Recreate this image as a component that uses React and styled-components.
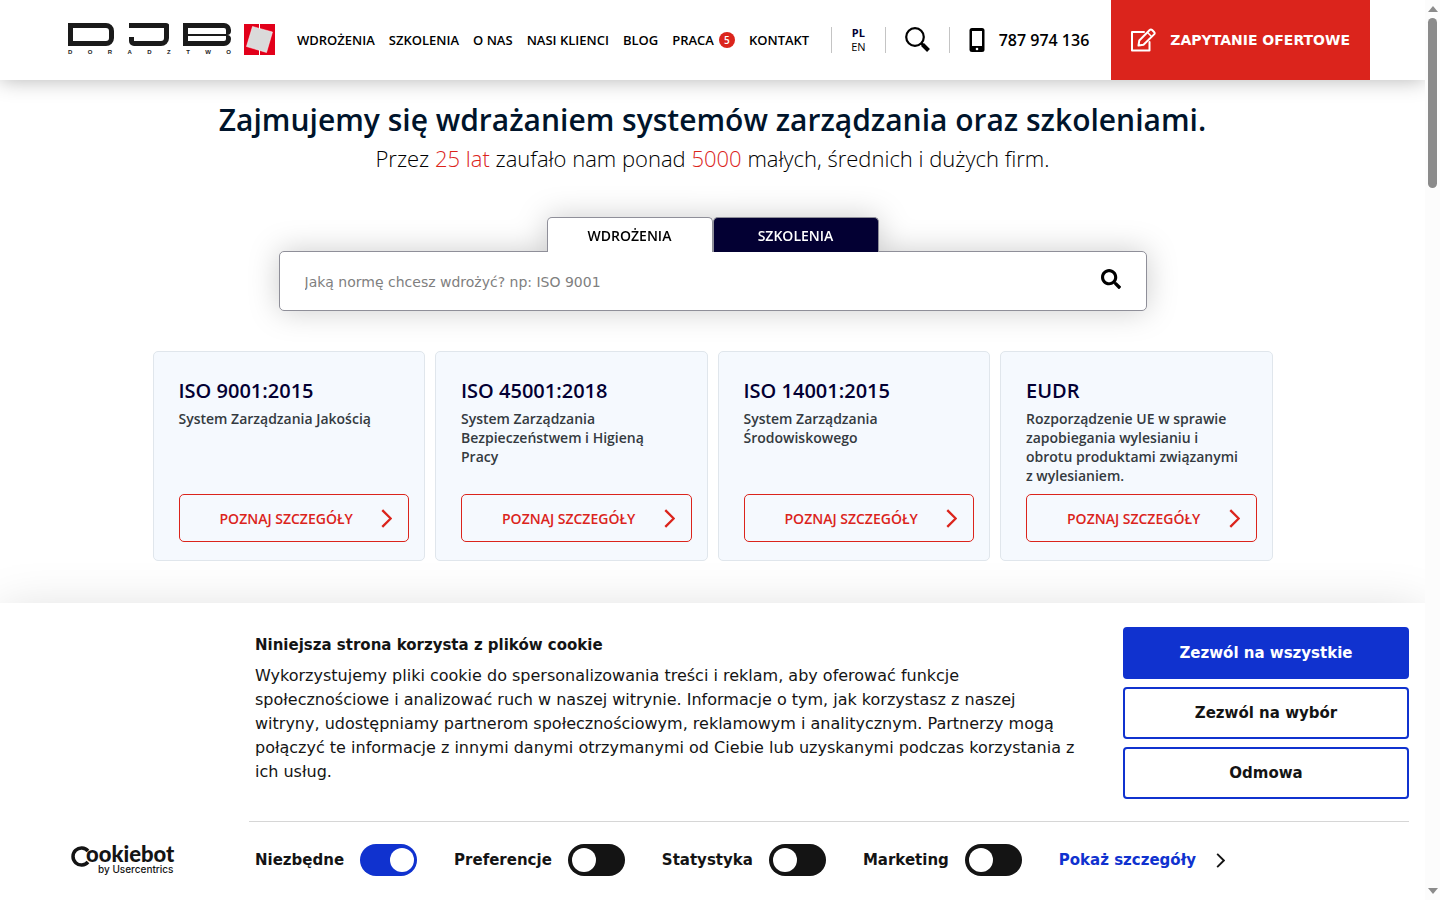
import React from 'react';
import styled, { createGlobalStyle } from 'styled-components';
import { FaSearch } from 'react-icons/fa';

const GlobalStyle = createGlobalStyle`
	* {
		box-sizing: border-box;
	}
	body {
		margin: 0;
		background: #fff;
		color: #000;
		font-family: "Open Sans", "Noto Sans", sans-serif;
		overflow: hidden;
	}
	h1, h2, p {
		margin: 0;
	}
	a {
		color: inherit;
		text-decoration: none;
	}
	button, input {
		font-family: "DejaVu Sans", sans-serif;
	}
`

const Shell = styled.div`
	display: flex;
	height: 100vh;
`

const Page = styled.div`
	position: relative;
	flex: 1;
	min-width: 0;
	overflow: hidden;
`

const Header = styled.header`
	display: flex;
	align-items: center;
	height: 80px;
	padding: 0 55px 0 68px;
	background: #fff;
	box-shadow: 0 0 20px rgba(0, 0, 0, 0.3);
`

const Logo = styled.a`
	display: flex;
	align-items: flex-end;
	gap: 13px;
	margin-right: 22px;
	padding-bottom: 2px;
`

const LogoMark = styled.div`
	width: 163px;
`

const LogoLetters = styled.div`
	display: flex;
	justify-content: space-between;
	height: 23px;
`

const LetterD = styled.div`
	width: 46px;
	border: solid #1a1a1a;
	border-width: 5px;
	border-radius: 0 8px 8px 0;
`

const LetterJ = styled.div`
	display: flex;
	align-items: flex-end;
	width: 40px;
	border: solid #1a1a1a;
	border-width: 5px 5px 5px 0;
	border-radius: 0 3px 8px 5px;
	&::before {
		content: "";
		width: 5px;
		height: 4px;
		background: #1a1a1a;
	}
`

const LetterB = styled.div`
	width: 48px;
	display: flex;
	flex-direction: column;
	div {
		flex: 1;
		border: solid #1a1a1a;
		border-width: 5px 5px 1px 5px;
		border-radius: 0 7px 4px 0;
	}
	div + div {
		border-width: 1px 5px 5px 5px;
		border-radius: 0 4px 7px 0;
	}
`

const LogoCaption = styled.div`
	display: flex;
	justify-content: space-between;
	margin-top: 4px;
	font: bold 6px/5px "Liberation Sans", sans-serif;
	color: #1a1a1a;
`

const Nav = styled.nav`
	display: flex;
	align-items: center;
	gap: 14px;
	margin-right: 22px;
	font-size: 13px;
	font-weight: 600;
	white-space: nowrap;
	a {
		display: flex;
		align-items: center;
		gap: 5px;
	}
`

const Badge = styled.span`
	width: 16px;
	height: 16px;
	border-radius: 50%;
	background: #db241c;
	color: #fff;
	font-size: 10px;
	line-height: 16px;
	text-align: center;
`

const HeaderGroup = styled.div`
	display: flex;
	align-items: center;
	height: 26px;
	padding: 0 19px;
	border-left: 1px solid #c4c4c4;
`

const Languages = styled.div`
	display: flex;
	flex-direction: column;
	align-items: center;
	font-size: 11px;
	line-height: 14px;
	a:first-child {
		color: #030033;
		font-weight: 700;
	}
`

const IconButton = styled.button`
	display: flex;
	padding: 0;
	border: none;
	background: none;
	cursor: pointer;
`

const Phone = styled.a`
	display: flex;
	align-items: center;
	gap: 14px;
	font-size: 16px;
	font-weight: 600;
	white-space: nowrap;
`

const OfferLink = styled.a`
	display: flex;
	align-items: center;
	align-self: stretch;
	gap: 13px;
	margin-left: auto;
	padding: 0 20px 0 19px;
	background: #db241c;
	color: #fff;
	font: bold 14px/20px "DejaVu Sans", sans-serif;
	white-space: nowrap;
`

const Main = styled.main`
	display: flex;
	flex-direction: column;
	align-items: center;
	padding: 20px 24px;
`

const Title = styled.h1`
	color: #00142b;
	font-size: 30px;
	font-weight: 600;
	line-height: 40px;
`

const Subtitle = styled.p`
	font-size: 22px;
	font-weight: 300;
	line-height: 36px;
	em {
		color: #db241c;
		font-style: normal;
	}
`

const Search = styled.form`
	display: flex;
	flex-direction: column;
	align-items: center;
	width: 100%;
	max-width: 868px;
	margin: 41px 0 40px;
	filter: drop-shadow(0 0 15px rgba(0, 0, 0, 0.2));
`

const Tabs = styled.div`
	display: flex;
	z-index: 1;
	margin-bottom: -1px;
`

const Tab = styled.button`
	width: 166px;
	height: 35px;
	padding: 2px 0 0;
	border: 1px solid #8f8f99;
	border-bottom: none;
	border-radius: 5px 5px 0 0;
	background: ${props => props.$dark ? '#030033' : '#fff'};
	color: ${props => props.$dark ? '#fff' : '#000'};
	font: 600 14px/20px "Open Sans", sans-serif;
	cursor: pointer;
`

const SearchBox = styled.div`
	display: flex;
	align-items: center;
	width: 100%;
	height: 60px;
	padding: 0 25px;
	border: 1px solid #8f8f99;
	border-radius: 5px;
	background: #fff;
	input {
		flex: 1;
		height: 56px;
		padding: 2px 0 0;
		border: none;
		outline: none;
		background: none;
		font-size: 14px;
	}
	input::placeholder {
		color: #808080;
	}
	button {
		padding-bottom: 4px;
	}
`

const Cards = styled.div`
	display: grid;
	grid-template-columns: repeat(4, 1fr);
	gap: 10px;
	width: 100%;
	max-width: 1120px;
`

const Card = styled.article`
	display: flex;
	flex-direction: column;
	min-height: 210px;
	padding: 25px 15px 18px 25px;
	border: 1px solid #e0e6ec;
	border-radius: 5px;
	background: #f5f9fe;
	h2 {
		color: #030033;
		font-size: 20px;
		font-weight: 600;
		line-height: 28px;
	}
	p {
		margin: 4px 0 8px;
		padding-right: 14px;
		color: #343a40;
		font-size: 14px;
		font-weight: 600;
		line-height: 19px;
	}
`

const DetailsLink = styled.a`
	display: flex;
	align-items: center;
	justify-content: space-between;
	height: 48px;
	margin-top: auto;
	padding: 0 16px 0 40px;
	border: 1px solid #db241c;
	border-radius: 5px;
	color: #db241c;
	font-size: 14px;
	font-weight: 600;
	white-space: nowrap;
`

const CookieBanner = styled.section`
	position: absolute;
	left: 0;
	right: 0;
	bottom: 0;
	display: grid;
	grid-template-columns: 249px 1fr;
	padding: 24px 16px 16px 0;
	background: #fff;
	color: #141414;
	box-shadow: 0 8px 48px rgba(0, 0, 0, 0.15);
	font-family: "DejaVu Sans", sans-serif;
	font-size: 15px;
`

const CookieContent = styled.div`
	grid-column: 2;
	display: flex;
	justify-content: space-between;
	padding-bottom: 22px;
	border-bottom: 1px solid #d6d6d6;
`

const CookieText = styled.div`
	max-width: 836px;
	padding: 6px 0 0 6px;
	font-size: 16px;
	line-height: 24px;
	h2 {
		margin-bottom: 7px;
		font-size: 15px;
	}
`

const CookieButtons = styled.div`
	display: flex;
	flex-direction: column;
	gap: 8px;
	width: 286px;
`

const CookieButton = styled.button`
	height: 52px;
	border: 2px solid #1032cf;
	border-radius: 4px;
	background: ${props => props.$primary ? '#1032cf' : '#fff'};
	color: ${props => props.$primary ? '#fff' : '#141414'};
	font-size: 15px;
	font-weight: 700;
	cursor: pointer;
`

const CookieLogo = styled.a`
	display: flex;
	align-self: center;
	justify-self: start;
	margin: 8px 0 0 71px;
`

const CookieOptions = styled.div`
	display: flex;
	align-items: center;
	gap: 37px;
	padding: 22px 0 8px 6px;
	font-weight: 700;
	white-space: nowrap;
	label {
		display: flex;
		align-items: center;
		gap: 16px;
	}
`

const Toggle = styled.input`
	appearance: none;
	display: flex;
	width: 57px;
	height: 32px;
	margin: 0;
	padding: 4px;
	border-radius: 16px;
	background: #141414;
	&::before {
		content: "";
		width: 24px;
		height: 24px;
		border-radius: 50%;
		background: #fff;
	}
	&:checked {
		justify-content: flex-end;
		padding-right: 3px;
		background: #1032cf;
	}
`

const ShowDetails = styled.a`
	display: flex;
	align-items: center;
	gap: 20px;
	color: #1032cf;
`

const Scrollbar = styled.div`
	display: flex;
	flex-direction: column;
	align-items: center;
	width: 15px;
	padding: 6px 0;
	background: #fcfcfc;
`

const Thumb = styled.div`
	width: 9px;
	height: 170px;
	margin: 6px 0 auto;
	border-radius: 5px;
	background: #8b8b8b;
`

const Chevron = ({ width, height, color }) => (
	<svg width={width} height={height} viewBox="0 0 10 18" fill="none" stroke={color} strokeWidth="2.200">
		<path d="M1 1l8 8-8 8" />
	</svg>
)

const cards = [
	{ title: 'ISO 9001:2015', text: 'System Zarządzania Jakością' },
	{ title: 'ISO 45001:2018', text: 'System Zarządzania Bezpieczeństwem i Higieną Pracy' },
	{ title: 'ISO 14001:2015', text: 'System Zarządzania Środowiskowego' },
	{ title: 'EUDR', text: 'Rozporządzenie UE w sprawie zapobiegania wylesianiu i obrotu produktami związanymi z wylesianiem.' },
]

const App = () => (
	<Shell>
		<GlobalStyle />
		<Page>
			<Header>
				<Logo href="#" aria-label="DJB Doradztwo">
					<LogoMark>
						<LogoLetters>
							<LetterD />
							<LetterJ />
							<LetterB><div /><div /></LetterB>
						</LogoLetters>
						<LogoCaption>
							{'DORADZTWO'.split('').map((letter, i) => <span key={i}>{letter}</span>)}
						</LogoCaption>
					</LogoMark>
					<svg width="31" height="31" viewBox="0 0 31 31">
						<path fill="#e2001a" d="M0 0h31v31H0z" />
						<path stroke="#fff" d="M15.5 0v31" />
						<path fill="#dadada" stroke="#fff" strokeWidth="0.5" d="M8.500 2.500l20 5.500-6 20.500-20-6z" />
					</svg>
				</Logo>
				<Nav>
					<a href="#">WDROŻENIA</a>
					<a href="#">SZKOLENIA</a>
					<a href="#">O NAS</a>
					<a href="#">NASI KLIENCI</a>
					<a href="#">BLOG</a>
					<a href="#">PRACA <Badge>5</Badge></a>
					<a href="#">KONTAKT</a>
				</Nav>
				<HeaderGroup>
					<Languages>
						<a href="#">PL</a>
						<a href="#">EN</a>
					</Languages>
				</HeaderGroup>
				<HeaderGroup>
					<IconButton aria-label="Szukaj">
						<svg width="25" height="26" viewBox="0 0 25 26" fill="none" stroke="#000">
							<circle cx="10" cy="10" r="8.800" strokeWidth="2.200" />
							<path strokeWidth="2.500" d="M16 16l2.500 2.500" />
							<path strokeWidth="4" d="M17.500 17.500l6 6" />
						</svg>
					</IconButton>
				</HeaderGroup>
				<HeaderGroup>
					<Phone href="tel:787974136">
						<svg width="16" height="24" viewBox="0 0 16 24">
							<rect width="15" height="24" x="0.500" rx="2.500" />
							<path fill="#fff" d="M3 3h10v15H3z" />
							<circle cx="8" cy="21" r="1.300" fill="#fff" />
						</svg>
						787 974 136
					</Phone>
				</HeaderGroup>
				<OfferLink href="#">
					<svg width="27" height="24" viewBox="0 0 27 24" fill="none" stroke="#fff" strokeWidth="2" strokeLinejoin="round" strokeLinecap="round">
						<path d="M14 4H2v18.500h17.500V14" />
						<path d="M8.500 17.500l0.800-5L19.700 2q1.200-1.200 2.400 0l2 2q1.200 1.200 0 2.400L13.500 16.700z" />
						<path d="M17.500 4.500l4 4" strokeWidth="1.500" />
					</svg>
					ZAPYTANIE OFERTOWE
				</OfferLink>
			</Header>

			<Main>
				<Title>Zajmujemy się wdrażaniem systemów zarządzania oraz szkoleniami.</Title>
				<Subtitle>
					Przez <em>25 lat</em> zaufało nam ponad <em>5000</em> małych, średnich i dużych firm.
				</Subtitle>
				<Search>
					<Tabs>
						<Tab type="button">WDROŻENIA</Tab>
						<Tab type="button" $dark>SZKOLENIA</Tab>
					</Tabs>
					<SearchBox>
						<input type="text" aria-label="Norma" placeholder="Jaką normę chcesz wdrożyć? np: ISO 9001" />
						<IconButton type="submit" aria-label="Szukaj normy">
							<FaSearch size={20} />
						</IconButton>
					</SearchBox>
				</Search>
				<Cards>
					{cards.map(card => (
						<Card key={card.title}>
							<h2>{card.title}</h2>
							<p>{card.text}</p>
							<DetailsLink href="#">
								POZNAJ SZCZEGÓŁY
								<Chevron width={11} height={19} color="#db241c" />
							</DetailsLink>
						</Card>
					))}
				</Cards>
			</Main>

			<CookieBanner>
				<CookieContent>
					<CookieText>
						<h2>Niniejsza strona korzysta z plików cookie</h2>
						<p>
							Wykorzystujemy pliki cookie do spersonalizowania treści i reklam, aby oferować funkcje
							społecznościowe i analizować ruch w naszej witrynie. Informacje o tym, jak korzystasz z naszej
							witryny, udostępniamy partnerom społecznościowym, reklamowym i analitycznym. Partnerzy mogą
							połączyć te informacje z innymi danymi otrzymanymi od Ciebie lub uzyskanymi podczas korzystania z
							ich usług.
						</p>
					</CookieText>
					<CookieButtons>
						<CookieButton $primary>Zezwól na wszystkie</CookieButton>
						<CookieButton>Zezwól na wybór</CookieButton>
						<CookieButton>Odmowa</CookieButton>
					</CookieButtons>
				</CookieContent>
				<CookieLogo href="#" aria-label="Cookiebot by Usercentrics">
					<svg width="106" height="42" viewBox="0 0 106 42" fill="#141414">
						<path fill="none" stroke="#141414" strokeWidth="3.500" d="M17 15A8.500 8.500 0 1 0 17 26" />
						<text x="15" y="26" fontFamily="Lato" fontWeight="900" fontSize="22">ookiebot</text>
						<text x="27" y="37" fontFamily="Inter" fontWeight="500" fontSize="10">by Usercentrics</text>
					</svg>
				</CookieLogo>
				<CookieOptions>
					<label>Niezbędne <Toggle type="checkbox" defaultChecked /></label>
					<label>Preferencje <Toggle type="checkbox" /></label>
					<label>Statystyka <Toggle type="checkbox" /></label>
					<label>Marketing <Toggle type="checkbox" /></label>
					<ShowDetails href="#">
						Pokaż szczegóły
						<Chevron width={9} height={15} color="#141414" />
					</ShowDetails>
				</CookieOptions>
			</CookieBanner>
		</Page>

		<Scrollbar>
			<svg width="10" height="6" fill="#8b8b8b"><path d="M5 0l5 6H0z" /></svg>
			<Thumb />
			<svg width="10" height="6" fill="#8b8b8b"><path d="M0 0h10L5 6z" /></svg>
		</Scrollbar>
	</Shell>
)

export default App;
